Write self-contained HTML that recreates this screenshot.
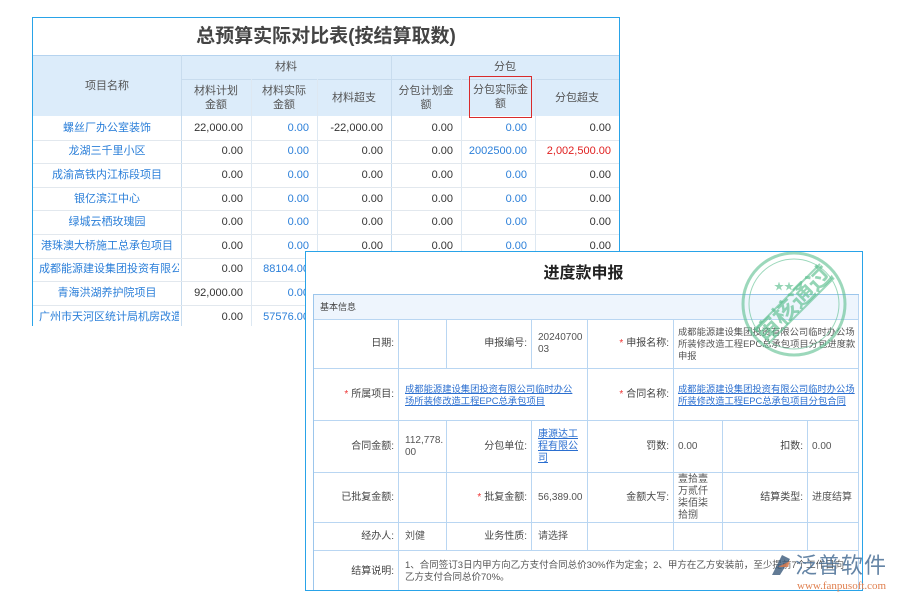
<!DOCTYPE html>
<html><head><meta charset="utf-8"><style>
*{margin:0;padding:0;box-sizing:border-box}
body{width:900px;height:600px;background:#fff;position:relative;overflow:hidden;font-family:"Liberation Sans","Noto Sans CJK SC",sans-serif;font-size:11px;color:#333}
.a{position:absolute}
#t1{left:32px;top:17px;width:588px;height:309px;border:1.5px solid #29a3e8;border-bottom:none;overflow:hidden}
.c{position:absolute;display:flex;align-items:center;justify-content:center;text-align:center;line-height:14px}
.r{justify-content:flex-end;padding-right:8px}
.blue{color:#2b7fd9}
#t2{left:305px;top:251px;width:558px;height:340px;border:1.5px solid #29a3e8;background:#fff;overflow:hidden}
.cell{position:absolute;border-right:1px solid #b9d6f2;border-bottom:1px solid #b9d6f2;display:flex;align-items:center;font-size:9.3px;color:#555;line-height:12px;padding:0 6px}
.lab{justify-content:flex-end;padding-right:4px;color:#444;font-size:10px}
.lk{color:#2b6fd0;text-decoration:underline}
.st{color:#e33;margin-right:3px}
</style></head><body>
<div id="t1" class="a">
 <div class="c" style="left:0;top:0;width:586px;height:37px;font-size:19px;font-weight:bold;color:#444">总预算实际对比表(按结算取数)</div>
 <div class="a" style="left:0;top:37px;width:586px;height:61px;background:#dcecfa;border-top:1px solid #b5d3ef"></div>
 <div class="a" style="left:148px;top:37px;width:1px;height:272px;background:#c8dcee"></div>
 <div class="a" style="left:148px;top:61px;width:438px;height:1px;background:#c8dcee"></div>
 <div class="a" style="left:218px;top:61px;width:1px;height:248px;background:#dde8f2"></div>
 <div class="a" style="left:284px;top:61px;width:1px;height:248px;background:#dde8f2"></div>
 <div class="a" style="left:358px;top:37px;width:1px;height:272px;background:#c8dcee"></div>
 <div class="a" style="left:428px;top:61px;width:1px;height:248px;background:#dde8f2"></div>
 <div class="a" style="left:502px;top:61px;width:1px;height:248px;background:#dde8f2"></div>
 <div class="c" style="left:0;top:37px;width:148px;height:61px;color:#555">项目名称</div>
 <div class="c" style="left:148px;top:37px;width:210px;height:24px;color:#555">材料</div>
 <div class="c" style="left:358px;top:37px;width:228px;height:24px;color:#555">分包</div>
 <div class="c" style="left:148px;top:61px;width:70px;height:37px;color:#555">材料计划<br>金额</div>
 <div class="c" style="left:218px;top:61px;width:66px;height:37px;color:#555">材料实际<br>金额</div>
 <div class="c" style="left:284px;top:61px;width:74px;height:37px;color:#555">材料超支</div>
 <div class="c" style="left:358px;top:61px;width:70px;height:37px;color:#555">分包计划金<br>额</div>
 <div class="c" style="left:436px;top:58px;width:63px;height:42px;color:#555;border:1.5px solid #d92b2b">分包实际金<br>额</div>
 <div class="c" style="left:502px;top:61px;width:84px;height:37px;color:#555">分包超支</div>
 <div id="rows"></div>
</div>
<script>
var d=[["螺丝厂办公室装饰","22,000.00","0.00","-22,000.00","0.00","0.00","0.00"],
["龙湖三千里小区","0.00","0.00","0.00","0.00","2002500.00","2,002,500.00"],
["成渝高铁内江标段项目","0.00","0.00","0.00","0.00","0.00","0.00"],
["银亿滨江中心","0.00","0.00","0.00","0.00","0.00","0.00"],
["绿城云栖玫瑰园","0.00","0.00","0.00","0.00","0.00","0.00"],
["港珠澳大桥施工总承包项目","0.00","0.00","0.00","0.00","0.00","0.00"],
["成都能源建设集团投资有限公司","0.00","88104.00","","","",""],
["青海洪湖养护院项目","92,000.00","0.00","","","",""],
["广州市天河区统计局机房改造工程","0.00","57576.00","","","",""]];
var cols=[[0,148],[148,70],[218,66],[284,74],[358,70],[428,74],[502,84]];
var h="";
for(var i=0;i<9;i++){var y=98+i*23.6;
h+='<div class="a" style="left:0;top:'+(y+23.6)+'px;width:586px;height:1px;background:#e2e8ee"></div>';
for(var j=0;j<7;j++){var t=d[i][j];var cl=j==0?"c blue":"c r";var col="";
if(j==0&&(i==6||i==8))col="justify-content:flex-start;padding-left:6px;width:146px;";
if(j==2||j==5)col="color:#2b7fd9";if(i==1&&j==6)col="color:#e02020";
h+='<div class="'+cl+'" style="left:'+cols[j][0]+'px;top:'+y+'px;width:'+cols[j][1]+'px;height:23.6px;white-space:nowrap;overflow:hidden;'+col+'">'+t+'</div>';}}
document.getElementById("rows").innerHTML=h;
</script>
<div id="t2" class="a">
 <div class="c" style="left:0;top:8px;width:555px;height:28px;font-size:16px;font-weight:bold;color:#222">进度款申报</div>
 <div class="a" style="left:7px;top:42px;width:546px;height:299px;border:1px solid #9cc6ec;border-right:none;border-bottom:none"></div>
 <div class="cell" style="left:8px;top:43px;width:545px;height:25px;background:#eef5fd;font-size:9px;color:#444">基本信息</div>
 <div class="cell lab" style="left:8px;top:68px;width:85px;height:49px">日期:</div>
 <div class="cell" style="left:93px;top:68px;width:48px;height:49px"></div>
 <div class="cell lab" style="left:141px;top:68px;width:85px;height:49px">申报编号:</div>
 <div class="cell" style="left:226px;top:68px;width:56px;height:49px;font-size:10px">20240700<br>03</div>
 <div class="cell lab" style="left:282px;top:68px;width:86px;height:49px"><span class="st">*</span>申报名称:</div>
 <div class="cell" style="left:368px;top:68px;width:185px;height:49px;padding-left:4px;padding-right:2px">成都能源建设集团投资有限公司临时办公场所装修改造工程EPC总承包项目分包进度款申报</div>
 <div class="cell lab" style="left:8px;top:117px;width:85px;height:52px"><span class="st">*</span>所属项目:</div>
 <div class="cell" style="left:93px;top:117px;width:189px;height:52px"><span class="lk">成都能源建设集团投资有限公司临时办公场所装修改造工程EPC总承包项目</span></div>
 <div class="cell lab" style="left:282px;top:117px;width:86px;height:52px"><span class="st">*</span>合同名称:</div>
 <div class="cell" style="left:368px;top:117px;width:185px;height:52px;padding-left:4px;padding-right:2px"><span class="lk">成都能源建设集团投资有限公司临时办公场所装修改造工程EPC总承包项目分包合同</span></div>
 <div class="cell lab" style="left:8px;top:169px;width:85px;height:52px">合同金额:</div>
 <div class="cell" style="left:93px;top:169px;width:48px;height:52px;font-size:10px">112,778.<br>00</div>
 <div class="cell lab" style="left:141px;top:169px;width:85px;height:52px">分包单位:</div>
 <div class="cell" style="left:226px;top:169px;width:56px;height:52px;font-size:10px"><span class="lk">康源达工程有限公司</span></div>
 <div class="cell lab" style="left:282px;top:169px;width:86px;height:52px">罚数:</div>
 <div class="cell" style="left:368px;top:169px;width:49px;height:52px;padding-left:4px;font-size:10px">0.00</div>
 <div class="cell lab" style="left:417px;top:169px;width:85px;height:52px">扣数:</div>
 <div class="cell" style="left:502px;top:169px;width:51px;height:52px;padding-left:4px;font-size:10px">0.00</div>
 <div class="cell lab" style="left:8px;top:221px;width:85px;height:50px">已批复金额:</div>
 <div class="cell" style="left:93px;top:221px;width:48px;height:50px"></div>
 <div class="cell lab" style="left:141px;top:221px;width:85px;height:50px"><span class="st">*</span>批复金额:</div>
 <div class="cell" style="left:226px;top:221px;width:56px;height:50px;font-size:10px">56,389.00</div>
 <div class="cell lab" style="left:282px;top:221px;width:86px;height:50px">金额大写:</div>
 <div class="cell" style="left:368px;top:221px;width:49px;height:50px;padding-left:4px;font-size:10px">壹拾壹万贰仟柒佰柒拾捌</div>
 <div class="cell lab" style="left:417px;top:221px;width:85px;height:50px">结算类型:</div>
 <div class="cell" style="left:502px;top:221px;width:51px;height:50px;padding-left:4px;font-size:10px">进度结算</div>
 <div class="cell lab" style="left:8px;top:271px;width:85px;height:28px">经办人:</div>
 <div class="cell" style="left:93px;top:271px;width:48px;height:28px;font-size:10px">刘健</div>
 <div class="cell lab" style="left:141px;top:271px;width:85px;height:28px">业务性质:</div>
 <div class="cell" style="left:226px;top:271px;width:56px;height:28px;font-size:10px">请选择</div>
 <div class="cell" style="left:282px;top:271px;width:86px;height:28px"></div>
 <div class="cell" style="left:368px;top:271px;width:49px;height:28px"></div>
 <div class="cell" style="left:417px;top:271px;width:85px;height:28px"></div>
 <div class="cell" style="left:502px;top:271px;width:51px;height:28px"></div>
 <div class="cell lab" style="left:8px;top:299px;width:85px;height:42px">结算说明:</div>
 <div class="cell" style="left:93px;top:299px;width:460px;height:42px;font-size:9.5px">1、合同签订3日内甲方向乙方支付合同总价30%作为定金；2、甲方在乙方安装前，至少提前7个工作日向乙方支付合同总价70%。</div>
</div>
<svg class="a" style="left:738px;top:248px" width="112" height="112" viewBox="0 0 112 112">
 <g fill="none" stroke="#5cbf8f" opacity="0.6">
  <circle cx="56" cy="56" r="51" stroke-width="3"/>
  <circle cx="56" cy="56" r="45" stroke-width="1"/>
  <line x1="16" y1="82" x2="82" y2="16" stroke-width="2"/>
  <line x1="30" y1="96" x2="96" y2="30" stroke-width="2"/>
 </g>
 <text x="56" y="64" transform="rotate(-45 56 56)" text-anchor="middle" font-size="24" font-weight="bold" fill="#5cbf8f" opacity="0.65" font-family="Noto Sans CJK SC,sans-serif">审核通过</text>
 <text x="36" y="42" font-size="10" fill="#5cbf8f" opacity="0.65">★★</text>
</svg>
<svg class="a" style="left:770px;top:553px" width="22" height="24" viewBox="0 0 22 24"><path d="M2 22 L12 2 L20 6 L10 22Z" fill="#3b5a7a" opacity="0.8"/><path d="M8 14 L20 8 L18 14Z" fill="#e07a4a" opacity="0.8"/></svg>
<div class="a" style="left:795px;top:551px;font-size:22px;color:#4a6f96;font-family:'Noto Sans CJK SC',sans-serif;opacity:0.85;letter-spacing:1px;line-height:26px">泛普软件</div>
<div class="a" style="left:797px;top:580px;font-size:11px;color:#e08050;font-family:'Liberation Serif',serif;line-height:12px">www.fanpusoft.com</div>
</body></html>
